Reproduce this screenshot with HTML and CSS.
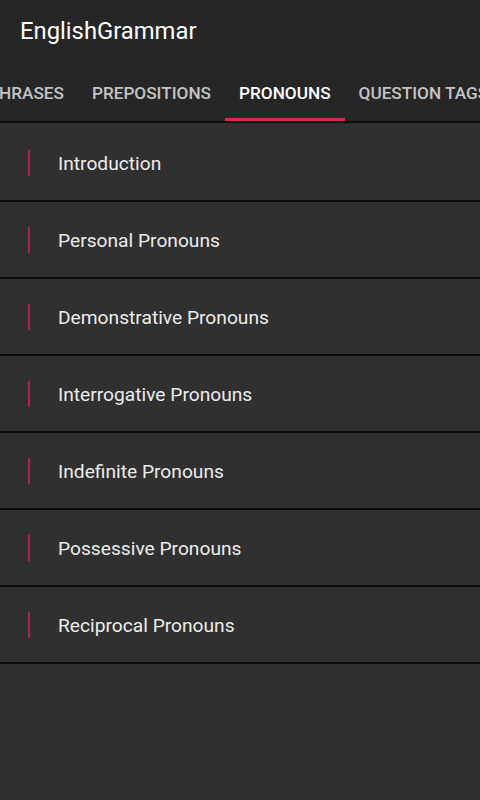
FILE: index.html
```html
<!DOCTYPE html>
<html lang="en">

<head>
    <meta charset="UTF-8">
    <meta name="viewport" content="width=device-width, initial-scale=1.0">
    <title>EnglishGrammar</title>
    <link rel="stylesheet" href="styles.css">
</head>

<body>
    <header class="app-bar">
        <h1>EnglishGrammar</h1>
    </header>
    <nav class="tabs">
        <div class="tab-strip">
            <span class="tab tab-first">PHRASES</span>
            <span class="tab">PREPOSITIONS</span>
            <span class="tab active">PRONOUNS</span>
            <span class="tab">QUESTION TAGS</span>
        </div>
    </nav>
    <main>
        <ul class="topic-list">
            <li class="topic"><span class="marker"></span>Introduction</li>
            <li class="topic"><span class="marker"></span>Personal Pronouns</li>
            <li class="topic"><span class="marker"></span>Demonstrative Pronouns</li>
            <li class="topic"><span class="marker"></span>Interrogative Pronouns</li>
            <li class="topic"><span class="marker"></span>Indefinite Pronouns</li>
            <li class="topic"><span class="marker"></span>Possessive Pronouns</li>
            <li class="topic"><span class="marker"></span>Reciprocal Pronouns</li>
        </ul>
    </main>
</body>

</html>
```

FILE: styles.css
```css
/* Global Styles */
* {
    box-sizing: border-box;
    font-family: Roboto, 'Liberation Sans', sans-serif;
}

html,
body {
    margin: 0;
    height: 100%;
}

body {
    background-color: #303030;
    overflow: hidden;
}

/* App Bar */
.app-bar {
    height: 62px;
    background-color: #262626;
    display: flex;
    align-items: center;
    padding-left: 20px;
}

.app-bar h1 {
    margin: 0;
    font-size: 23.8px;
    font-weight: 400;
    color: #ffffff;
}

/* Tabs */
.tabs {
    background-color: #262626;
    border-bottom: 2px solid #0c0c0c;
    overflow: hidden;
}

.tab-strip {
    display: flex;
    white-space: nowrap;
}

.tab {
    height: 59px;
    padding: 6px 14px 0;
    display: flex;
    align-items: center;
    font-size: 17.2px;
    font-weight: 500;
    color: #c4c4c4;
    border-bottom: 3px solid transparent;
}

.tab-first {
    margin-left: -26px;
}

.tab.active {
    color: #ffffff;
    border-bottom-color: #de2553;
}

/* Topic List */
.topic-list {
    list-style: none;
    margin: 0;
    padding: 2px 0 0;
}

.topic {
    height: 77px;
    display: flex;
    align-items: center;
    padding-top: 1px;
    font-size: 19.2px;
    color: #ececec;
    border-bottom: 2px solid #0c0c0c;
}

.marker {
    width: 2px;
    height: 26px;
    margin-left: 28px;
    margin-right: 28px;
    background-color: #b3204c;
    box-shadow: -7px 0 4px rgba(20, 40, 30, 0.35);
}
```
